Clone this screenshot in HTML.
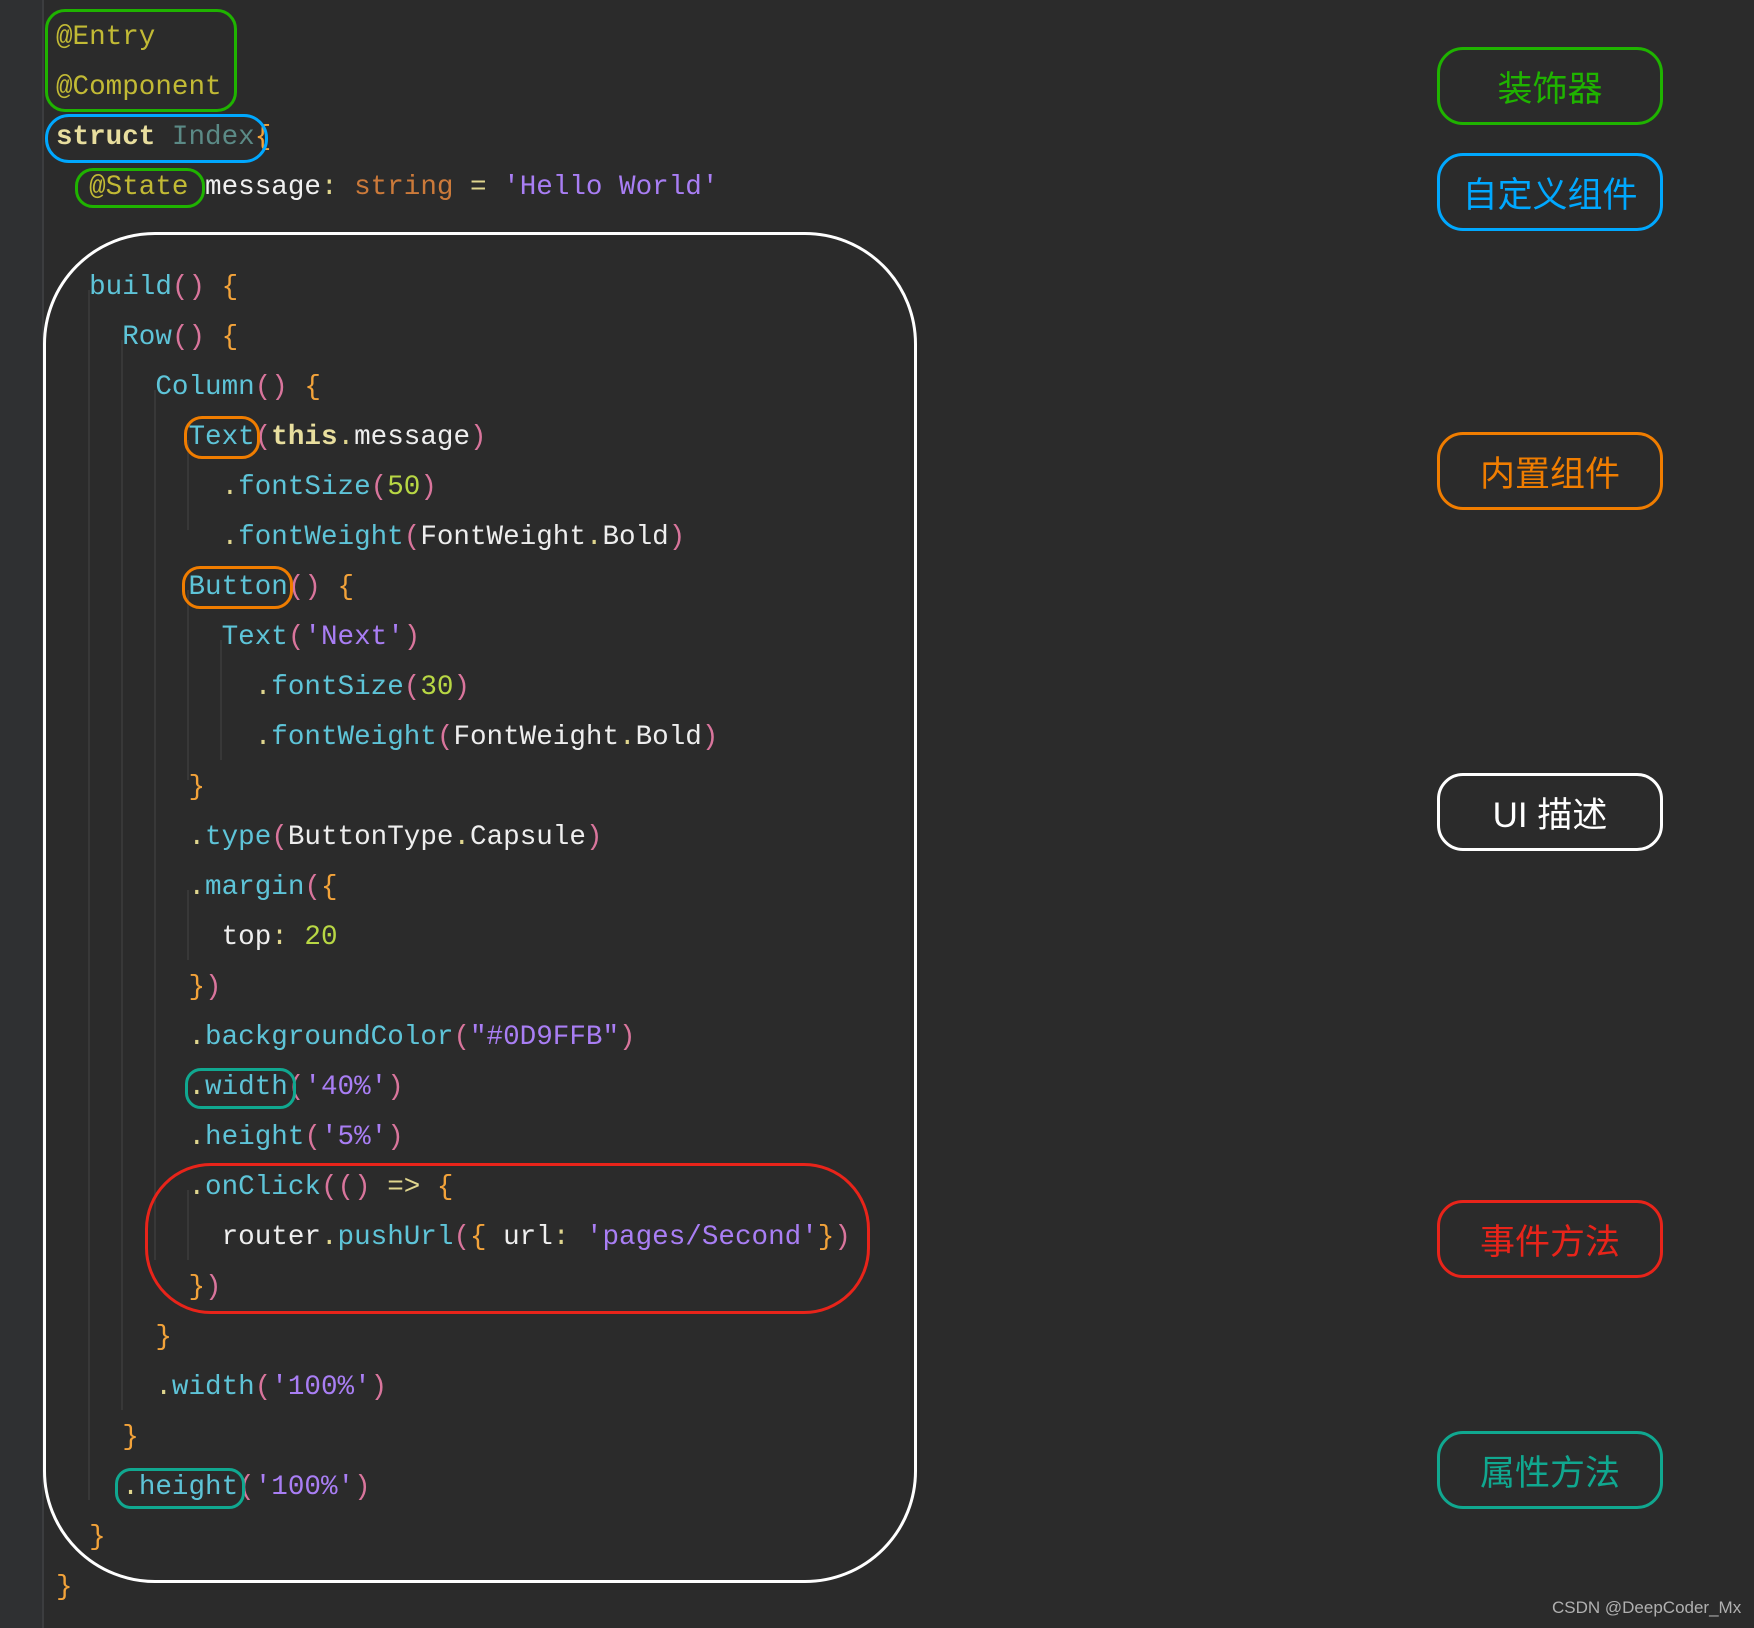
<!DOCTYPE html>
<html><head><meta charset="utf-8">
<style>
html,body{margin:0;padding:0;}
body{width:1754px;height:1628px;background:#2b2b2b;position:relative;overflow:hidden;font-family:"Liberation Mono",monospace;}
.gut{position:absolute;left:0;top:0;width:42px;height:1628px;background:#2f3032;}
.gl{position:absolute;left:42px;top:0;width:2px;height:1628px;background:#3c3d3f;}
.l{position:absolute;left:56px;height:50px;line-height:50px;font-size:27.6px;white-space:pre;color:#eeeeee;}
.d{color:#c2ba35}.c{color:#5ec4d8}.p{color:#d9759c}.b{color:#f3a33a}.s{color:#a97ef4}.n{color:#b8d744}
.k{color:#e8de9e;font-weight:bold}.ix{color:#5b8a86}.t{color:#cc7a3a}.y{color:#e0d68e}.w{color:#f0f0f0}
.box{position:absolute;border-style:solid;box-sizing:border-box;}
.lab{position:absolute;left:1437px;width:226px;height:78px;border:3px solid;border-radius:26px;box-sizing:border-box;display:flex;align-items:center;justify-content:center;font-family:"Liberation Sans","Noto Sans CJK SC",sans-serif;font-size:35px;}
.ig{position:absolute;width:2px;background:#383838;}
</style></head><body>
<div class="gut"></div><div class="gl"></div>
<div class="ig" style="left:88px;top:290px;height:1210px"></div>
<div class="ig" style="left:121px;top:340px;height:1070px"></div>
<div class="ig" style="left:154px;top:390px;height:870px"></div>
<div class="ig" style="left:187px;top:440px;height:90px"></div>
<div class="ig" style="left:187px;top:590px;height:190px"></div>
<div class="ig" style="left:220px;top:640px;height:120px"></div>
<div class="ig" style="left:187px;top:890px;height:70px"></div>
<div class="ig" style="left:187px;top:1190px;height:70px"></div>

<div class="l" style="top:13px"><span class="d">@Entry</span></div>
<div class="l" style="top:63px"><span class="d">@Component</span></div>
<div class="l" style="top:113px"><span class="k">struct</span> <span class="ix">Index</span><span class="b">{</span></div>
<div class="l" style="top:163px">  <span class="d">@State</span> <span class="w">message</span><span class="y">:</span> <span class="t">string</span> <span class="y">=</span> <span class="s">'Hello World'</span></div>
<div class="l" style="top:263px">  <span class="c">build</span><span class="p">()</span> <span class="b">{</span></div>
<div class="l" style="top:313px">    <span class="c">Row</span><span class="p">()</span> <span class="b">{</span></div>
<div class="l" style="top:363px">      <span class="c">Column</span><span class="p">()</span> <span class="b">{</span></div>
<div class="l" style="top:413px">        <span class="c">Text</span><span class="p">(</span><span class="k">this</span><span class="y">.</span>message<span class="p">)</span></div>
<div class="l" style="top:463px">          <span class="y">.</span><span class="c">fontSize</span><span class="p">(</span><span class="n">50</span><span class="p">)</span></div>
<div class="l" style="top:513px">          <span class="y">.</span><span class="c">fontWeight</span><span class="p">(</span>FontWeight<span class="y">.</span>Bold<span class="p">)</span></div>
<div class="l" style="top:563px">        <span class="c">Button</span><span class="p">()</span> <span class="b">{</span></div>
<div class="l" style="top:613px">          <span class="c">Text</span><span class="p">(</span><span class="s">'Next'</span><span class="p">)</span></div>
<div class="l" style="top:663px">            <span class="y">.</span><span class="c">fontSize</span><span class="p">(</span><span class="n">30</span><span class="p">)</span></div>
<div class="l" style="top:713px">            <span class="y">.</span><span class="c">fontWeight</span><span class="p">(</span>FontWeight<span class="y">.</span>Bold<span class="p">)</span></div>
<div class="l" style="top:763px">        <span class="b">}</span></div>
<div class="l" style="top:813px">        <span class="y">.</span><span class="c">type</span><span class="p">(</span>ButtonType<span class="y">.</span>Capsule<span class="p">)</span></div>
<div class="l" style="top:863px">        <span class="y">.</span><span class="c">margin</span><span class="p">(</span><span class="b">{</span></div>
<div class="l" style="top:913px">          top<span class="y">:</span> <span class="n">20</span></div>
<div class="l" style="top:963px">        <span class="b">}</span><span class="p">)</span></div>
<div class="l" style="top:1013px">        <span class="y">.</span><span class="c">backgroundColor</span><span class="p">(</span><span class="s">"#0D9FFB"</span><span class="p">)</span></div>
<div class="l" style="top:1063px">        <span class="y">.</span><span class="c">width</span><span class="p">(</span><span class="s">'40%'</span><span class="p">)</span></div>
<div class="l" style="top:1113px">        <span class="y">.</span><span class="c">height</span><span class="p">(</span><span class="s">'5%'</span><span class="p">)</span></div>
<div class="l" style="top:1163px">        <span class="y">.</span><span class="c">onClick</span><span class="p">(()</span> <span class="y">=&gt;</span> <span class="b">{</span></div>
<div class="l" style="top:1213px">          router<span class="y">.</span><span class="c">pushUrl</span><span class="p">(</span><span class="b">{</span> url<span class="y">:</span> <span class="s">'pages/Second'</span><span class="b">}</span><span class="p">)</span></div>
<div class="l" style="top:1263px">        <span class="b">}</span><span class="p">)</span></div>
<div class="l" style="top:1313px">      <span class="b">}</span></div>
<div class="l" style="top:1363px">      <span class="y">.</span><span class="c">width</span><span class="p">(</span><span class="s">'100%'</span><span class="p">)</span></div>
<div class="l" style="top:1413px">    <span class="b">}</span></div>
<div class="l" style="top:1463px">    <span class="y">.</span><span class="c">height</span><span class="p">(</span><span class="s">'100%'</span><span class="p">)</span></div>
<div class="l" style="top:1513px">  <span class="b">}</span></div>
<div class="l" style="top:1563px"><span class="b">}</span></div>

<div class="box" style="left:45px;top:9px;width:192px;height:103px;border-width:3px;border-color:#1fb300;border-radius:20px"></div>
<div class="box" style="left:45px;top:114px;width:223px;height:49px;border-width:3px;border-color:#00a8ff;border-radius:24px"></div>
<div class="box" style="left:75px;top:168px;width:130px;height:40px;border-width:3px;border-color:#1fb300;border-radius:18px"></div>
<div class="box" style="left:43px;top:232px;width:874px;height:1351px;border-width:3px;border-color:#ffffff;border-radius:112px"></div>
<div class="box" style="left:184px;top:416px;width:76px;height:43px;border-width:3px;border-color:#f07d00;border-radius:18px"></div>
<div class="box" style="left:182px;top:566px;width:111px;height:43px;border-width:3px;border-color:#f07d00;border-radius:18px"></div>
<div class="box" style="left:185px;top:1068px;width:111px;height:41px;border-width:3px;border-color:#10a890;border-radius:16px"></div>
<div class="box" style="left:145px;top:1163px;width:725px;height:151px;border-width:3px;border-color:#e8241a;border-radius:66px"></div>
<div class="box" style="left:115px;top:1468px;width:130px;height:41px;border-width:3px;border-color:#10a890;border-radius:16px"></div>

<div class="lab" style="top:47px;border-color:#1fb300;color:#1fb300">装饰器</div>
<div class="lab" style="top:153px;border-color:#00a8ff;color:#00a8ff">自定义组件</div>
<div class="lab" style="top:432px;border-color:#f07d00;color:#f07d00">内置组件</div>
<div class="lab" style="top:773px;border-color:#ffffff;color:#ffffff">UI 描述</div>
<div class="lab" style="top:1200px;border-color:#e8241a;color:#e8241a">事件方法</div>
<div class="lab" style="top:1431px;border-color:#10a890;color:#10a890">属性方法</div>

<div style="position:absolute;left:1552px;top:1598px;font-family:'Liberation Sans',sans-serif;font-size:17px;color:#b0b0b0;white-space:nowrap">CSDN @DeepCoder_Mx</div>
</body></html>
